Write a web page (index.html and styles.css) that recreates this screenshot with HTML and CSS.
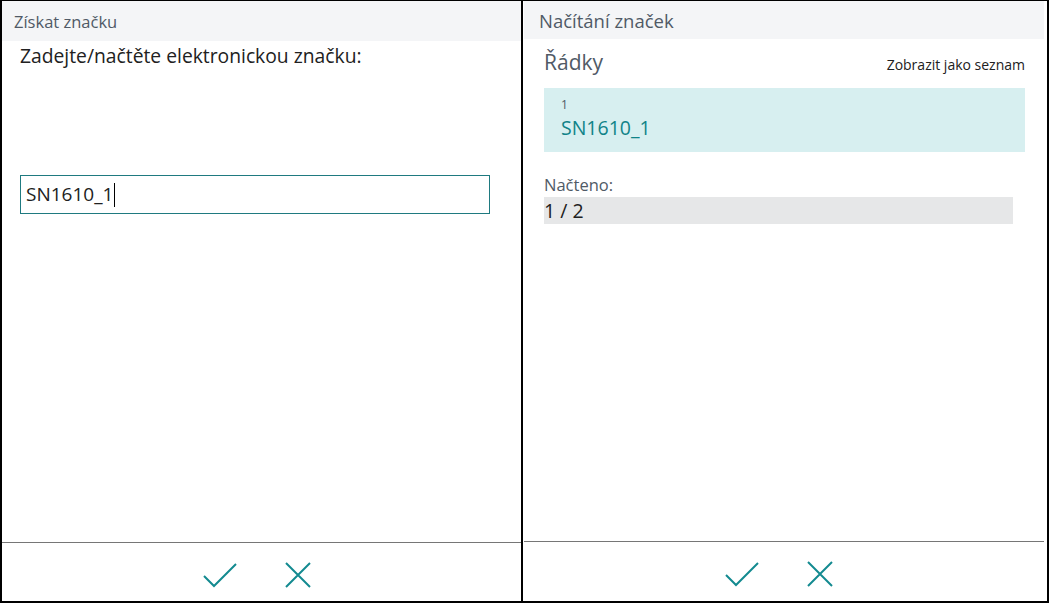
FILE: index.html
```html
<!DOCTYPE html>
<html lang="cs">
<head>
    <meta charset="UTF-8" />
    <title>Získat značku</title>
    <link rel="stylesheet" href="styles.css">
</head>
<body>
<div class="frame">
    <section class="panel panel-left">
        <header class="panel-head">Získat značku</header>
        <div class="panel-body">
            <label class="prompt" for="tag">Zadejte/načtěte elektronickou značku:</label>
            <div class="tag-input">
                <span id="tag">SN1610_1</span><span class="caret"></span>
            </div>
        </div>
        <footer class="panel-foot">
            <button class="icon-btn" title="OK">
                <svg width="34" height="26" viewBox="0 0 34 26"><path d="M1 14 L11 24 L33 2" fill="none" stroke="#138a90" stroke-width="2"/></svg>
            </button>
            <button class="icon-btn" title="Zrušit">
                <svg width="26" height="26" viewBox="0 0 26 26"><path d="M1 1 L25 25 M25 1 L1 25" fill="none" stroke="#138a90" stroke-width="2"/></svg>
            </button>
        </footer>
    </section>

    <section class="panel panel-right">
        <header class="panel-head">Načítání značek</header>
        <div class="panel-body">
            <div class="lines-head">
                <span class="lines-title">Řádky</span>
                <a class="lines-link">Zobrazit jako seznam</a>
            </div>
            <div class="card">
                <div class="card-num">1</div>
                <div class="card-value">SN1610_1</div>
            </div>
            <div class="field">
                <div class="field-label">Načteno:</div>
                <div class="field-value">1 / 2</div>
            </div>
        </div>
        <footer class="panel-foot">
            <button class="icon-btn" title="OK">
                <svg width="34" height="26" viewBox="0 0 34 26"><path d="M1 14 L11 24 L33 2" fill="none" stroke="#138a90" stroke-width="2"/></svg>
            </button>
            <button class="icon-btn" title="Zrušit">
                <svg width="26" height="26" viewBox="0 0 26 26"><path d="M1 1 L25 25 M25 1 L1 25" fill="none" stroke="#138a90" stroke-width="2"/></svg>
            </button>
        </footer>
    </section>
</div>
</body>
</html>
```

FILE: styles.css
```css
* {
    box-sizing: border-box;
}
body {
    margin: 0;
    font-family: 'Open Sans', 'Noto Sans', sans-serif;
    color: #212121;
    background: #fff;
}
.frame {
    display: flex;
    width: 1049px;
    height: 603px;
    border: 2px solid #000;
    border-top-width: 1px;
}
.panel {
    display: flex;
    flex-direction: column;
}
.panel-left {
    width: 521px;
    border-right: 2px solid #000;
}
.panel-right {
    flex: 1;
    padding: 0 3px 0 1px;
}
.panel-head {
    background: #f4f5f7;
    color: #505a66;
    font-size: 16.5px;
    height: 40px;
    line-height: 42px;
    padding-left: 12px;
}
.panel-right .panel-head {
    font-size: 18.5px;
    height: 38px;
    line-height: 40px;
    padding-left: 15px;
}
.panel-body {
    flex: 1;
}
.panel-left .panel-body {
    padding: 1px 0 0 18px;
}
.panel-right .panel-body {
    padding: 9px 19px 0 20px;
}
.prompt {
    display: block;
    font-size: 19.3px;
    line-height: 28px;
}
.tag-input {
    margin-top: 105px;
    width: 470px;
    height: 39px;
    border: 1px solid #1f7a80;
    padding: 0 5px;
    font-size: 19px;
    line-height: 37px;
    display: flex;
    align-items: center;
}
.caret {
    display: inline-block;
    width: 1px;
    height: 24px;
    background: #000;
    margin-left: 1px;
}
.lines-head {
    display: flex;
    justify-content: space-between;
    align-items: baseline;
    height: 40px;
}
.lines-title {
    font-size: 21px;
    color: #505a66;
}
.lines-link {
    font-size: 14px;
    color: #212121;
}
.card {
    background: #d7eff0;
    height: 64px;
    padding: 8px 17px 0;
}
.card-num {
    font-size: 12px;
    color: #505a66;
    line-height: 17px;
}
.card-value {
    font-size: 19.5px;
    color: #108388;
    line-height: 30px;
}
.field {
    margin-top: 21px;
}
.field-label {
    font-size: 16.5px;
    color: #505a66;
    line-height: 24px;
}
.field-value {
    background: #e6e7e8;
    width: 469px;
    height: 27px;
    font-size: 19.5px;
    line-height: 27px;
}
.panel-foot {
    height: 60px;
    border-top: 1px solid #767676;
    display: flex;
    justify-content: center;
    align-items: center;
    gap: 48px;
    padding: 5px 10px 0 0;
}
.panel-left .panel-foot {
    height: 59px;
}
.icon-btn {
    background: none;
    border: none;
    padding: 0;
    cursor: pointer;
    display: flex;
}
```
